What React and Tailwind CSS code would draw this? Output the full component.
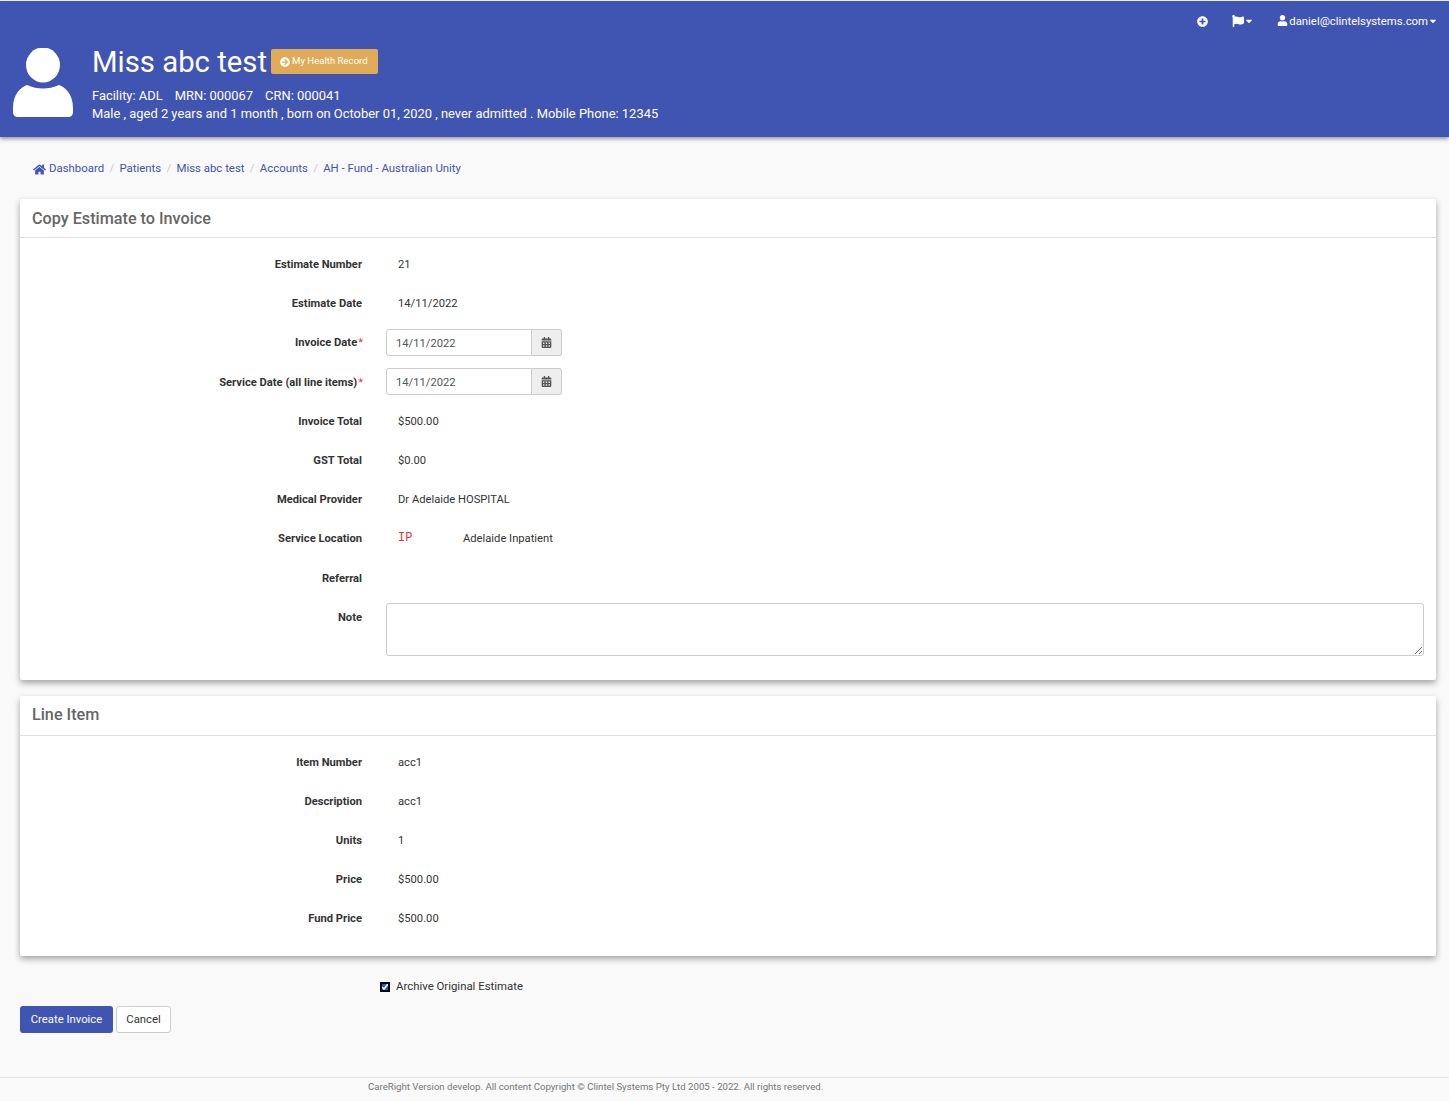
import { FaHome, FaCalendarAlt, FaUser, FaPlusCircle, FaFlag, FaArrowCircleRight, FaCaretDown } from "react-icons/fa";

const crumbs = ["Patients", "Miss abc test", "Accounts", "AH - Fund - Australian Unity"];

function Row({ label, required, className = "", labelClass = "", children }) {
  return (
    <div className={`flex gap-6 mb-3 min-h-[27px] ${className}`}>
      <label className={`w-[330px] shrink-0 text-right text-[11.2px] font-bold leading-[27px] text-[#333] ${labelClass}`}>
        {label}
        {required && <span className="text-[#e53935] font-normal ml-px mr-[-1px]">*</span>}
      </label>
      {children}
    </div>
  );
}

function Value({ children }) {
  return <div className="pl-3 text-[11.2px] leading-[27px] text-[#333]">{children}</div>;
}

function DateInput() {
  return (
    <div className="flex w-[176px] h-[27px] text-[11.2px]">
      <input
        readOnly
        value="14/11/2022"
        className="w-[146px] border border-[#ccc] rounded-l-[3px] bg-white pl-[9px] pr-[9px] pt-[4px] text-[#555] outline-none"
      />
      <span className="flex-1 flex items-center justify-center border border-l-0 border-[#ccc] rounded-r-[3px] bg-[#eee] text-[#555]">
        <FaCalendarAlt size={11} />
      </span>
    </div>
  );
}

function Card({ title, children, className = "", headClass = "h-[39px] leading-[39px]" }) {
  return (
    <section className={`ml-5 mr-[13px] bg-white rounded-[2px] shadow-[0_3px_6px_rgba(0,0,0,0.35)] ${className}`}>
      <h2 className={`px-3 border-b border-[#ddd] text-[16.2px] font-medium text-[#666] ${headClass}`}>{title}</h2>
      <div className="px-3 pt-[13px] pb-3">{children}</div>
    </section>
  );
}

export default function App() {
  return (
    <div className="min-h-[1101px] bg-[#f9f9f9] font-['Roboto',sans-serif] flex flex-col">
      <header className="relative mt-px h-[136px] bg-[#4054b2] text-white shadow-[0_2px_4px_rgba(0,0,0,0.4)]">
        <nav className="flex items-center justify-end h-[40px] pr-[11px] text-[11.35px]">
          <FaPlusCircle size={11} className="mr-[24px]" />
          <span className="flex items-center mr-[23px]">
            <FaFlag size={12} />
            <FaCaretDown size={10} />
          </span>
          <span className="flex items-center">
            <FaUser size={11} className="mr-px" />
            <span className="pt-[2px]">daniel@clintelsystems.com</span>
            <FaCaretDown size={10} />
          </span>
        </nav>
        <div className="flex pl-[13px]">
          <svg width="60" height="70" viewBox="0 0 60 70" className="mt-[7px] fill-white shrink-0">
            <ellipse cx="30" cy="17" rx="17" ry="17.5" />
            <path d="M0 60c0-14 8-21 14-23 5 2.500 11 3.500 16 3.500s11-1 16-3.500c6 2 14 9 14 23v4c0 3-2 5-5 5H5c-3 0-5-2-5-5z" />
          </svg>
          <div className="ml-[19px]">
            <div className="flex items-center h-[41px]">
              <h1 className="text-[29.3px] leading-none pt-[2px]">Miss abc test</h1>
              <span className="ml-[4px] flex items-center h-[25px] pl-[9px] pr-[10px] rounded-[2px] bg-[#dfab56] text-[9.6px]">
                <FaArrowCircleRight size={10} className="mr-[2px]" />
                My Health Record
              </span>
            </div>
            <div className="mt-[5px] text-[12.93px] leading-[18px] whitespace-nowrap">
              <div className="flex gap-3">
                <span>Facility: ADL</span>
                <span>MRN: 000067</span>
                <span>CRN: 000041</span>
              </div>
              <div>Male , aged 2 years and 1 month , born on October 01, 2020 , never admitted . Mobile Phone: 12345</div>
            </div>
          </div>
        </div>
      </header>

      <nav className="flex items-center h-[16px] mt-[24px] ml-[33px] text-[11.4px] text-[#4054b2]">
        <FaHome size={13} className="mr-[3px]" />
        Dashboard
        {crumbs.map((c) => (
          <span key={c} className="flex items-center">
            <span className="text-[#ccc] mx-[5.3px]">/</span>
            {c}
          </span>
        ))}
      </nav>

      <Card title="Copy Estimate to Invoice" className="mt-[22px]">
        <Row label="Estimate Number"><Value>21</Value></Row>
        <Row label="Estimate Date"><Value>14/11/2022</Value></Row>
        <Row label="Invoice Date" required><DateInput /></Row>
        <Row label="Service Date (all line items)" required labelClass="pt-px">
          <DateInput />
        </Row>
        <Row label="Invoice Total"><Value>$500.00</Value></Row>
        <Row label="GST Total"><Value>$0.00</Value></Row>
        <Row label="Medical Provider"><Value>Dr Adelaide HOSPITAL</Value></Row>
        <Row label="Service Location">
          <Value>
            <span className="inline-block w-[65px] -translate-y-px font-['Liberation_Mono',monospace] text-[12px] text-[#d9333f]">IP</span>
            Adelaide Inpatient
          </Value>
        </Row>
        <Row label="Referral" />
        <Row label="Note">
          <textarea className="flex-1 h-[53px] -mt-px border border-[#ccc] rounded-[3px] bg-white outline-none" />
        </Row>
      </Card>

      <Card title="Line Item" className="mt-[16px]" headClass="h-[40px] leading-[38px]">
        <Row label="Item Number"><Value>acc1</Value></Row>
        <Row label="Description"><Value>acc1</Value></Row>
        <Row label="Units"><Value>1</Value></Row>
        <Row label="Price"><Value>$500.00</Value></Row>
        <Row label="Fund Price"><Value>$500.00</Value></Row>
      </Card>

      <label className="flex items-center h-[16px] mt-[23px] ml-[380px] text-[11.4px] text-[#333]">
        <input
          type="checkbox"
          defaultChecked
          className="w-[10px] h-[10px] mr-[6px] accent-[#1a5fd8] rounded-[2px] outline-2 outline-black -outline-offset-2"
        />
        Archive Original Estimate
      </label>

      <div className="flex gap-[3px] mt-[11px] ml-5 text-[11.3px]">
        <button className="h-[27px] w-[93px] pt-[2px] rounded-[3px] bg-[#4054b2] text-white">Create Invoice</button>
        <button className="h-[27px] w-[55px] pt-[2px] rounded-[3px] border border-[#ccc] bg-white text-[#333]">Cancel</button>
      </div>

      <footer className="mt-[44px] h-[24px] border-t border-[#e7e7e7] pl-[368px] text-[9.65px] leading-[17px] text-[#777]">
        CareRight Version develop. All content Copyright © Clintel Systems Pty Ltd 2005 - 2022. All rights reserved.
      </footer>
    </div>
  );
}
